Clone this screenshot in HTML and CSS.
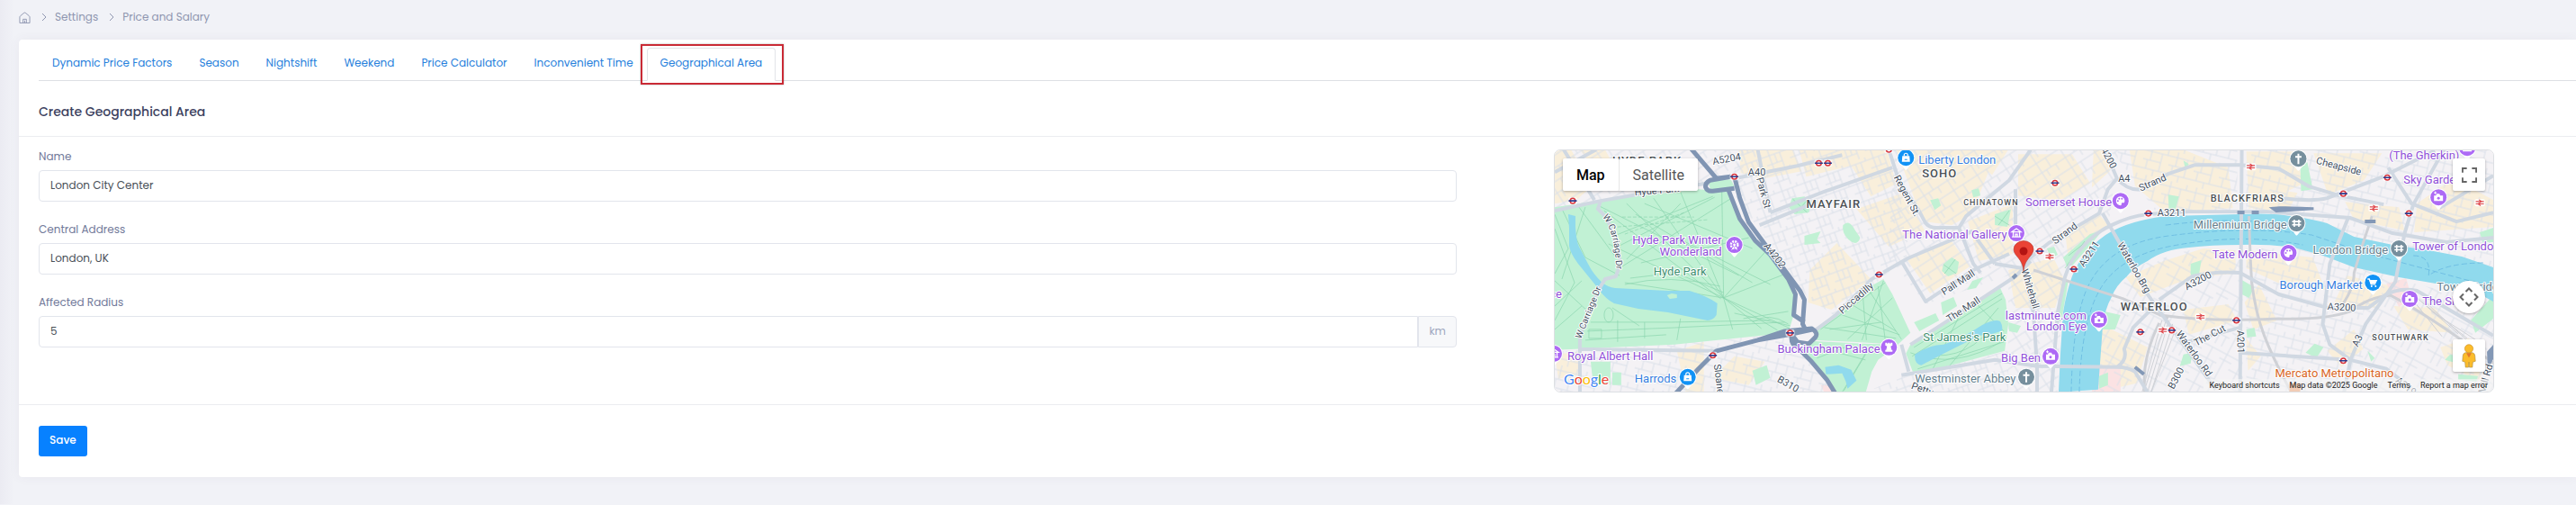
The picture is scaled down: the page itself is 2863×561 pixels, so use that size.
FILE: index.html
```
<!DOCTYPE html>
<html lang="en">
<head>
  <meta charset="UTF-8">
  <meta name="viewport" content="width=device-width, initial-scale=1.0">
  <title>Price and Salary - Geographical Area</title>
  <link rel="stylesheet" href="styles.css">
</head>
<body>
  <nav class="breadcrumb" aria-label="Breadcrumb">
    <a href="#" aria-label="Home">
      <svg class="icon-home" viewBox="0 0 14 14"><path d="M1 6.500Q1 5.500 2 4.800L6.300 1.300q.7-.5 1.400 0L12 4.800q1 .7 1 1.700V13.500H1zM5 13.500V9h4v4.500M7 10.500v3"/></svg>
    </a>
    <svg class="icon-chevron" viewBox="0 0 6 10"><path d="m1 1 4 4-4 4"/></svg>
    <a href="#">Settings</a>
    <svg class="icon-chevron" viewBox="0 0 6 10"><path d="m1 1 4 4-4 4"/></svg>
    <a href="#">Price and Salary</a>
  </nav>

  <main class="card">
    <ul class="tabs">
      <li><a href="#">Dynamic Price Factors</a></li>
      <li><a href="#">Season</a></li>
      <li><a href="#">Nightshift</a></li>
      <li><a href="#">Weekend</a></li>
      <li><a href="#">Price Calculator</a></li>
      <li><a href="#">Inconvenient Time</a></li>
      <li class="active"><a href="#">Geographical Area</a></li>
    </ul>

    <h1 class="card-title">Create Geographical Area</h1>

    <form class="area-form">
      <div class="form-body">
        <div class="fields">
          <div class="form-group">
            <label for="name">Name</label>
            <input type="text" id="name" value="London City Center">
          </div>
          <div class="form-group">
            <label for="address">Central Address</label>
            <input type="text" id="address" value="London, UK">
          </div>
          <div class="form-group">
            <label for="radius">Affected Radius</label>
            <div class="input-group">
              <input type="text" id="radius" value="5">
              <span class="input-addon">km</span>
            </div>
          </div>
        </div>

        <div class="map">
          <svg class="map-canvas" viewBox="0 0 1045 270" preserveAspectRatio="xMidYMid slice">
            <defs>
              <!-- Street grids -->
              <pattern id="grid-a" width="27" height="21" patternUnits="userSpaceOnUse" patternTransform="rotate(-20)">
                <path class="street" d="M0 4h27M0 14h18M6 0v21M18 4v17M24 0v4M12 4v10"/>
              </pattern>
              <pattern id="grid-b" width="31" height="25" patternUnits="userSpaceOnUse" patternTransform="rotate(-33)">
                <path class="street" d="M0 5h31M0 17h31M7 0v25M19 5v12M25 17v8M13 17v8"/>
              </pattern>
              <pattern id="grid-c" width="29" height="33" patternUnits="userSpaceOnUse" patternTransform="rotate(14)">
                <path class="street" d="M0 6h29M0 16h20M0 26h29M8 0v16M20 6v20M14 26v7M26 0v6M5 16v10"/>
              </pattern>
              <pattern id="grid-d" width="37" height="31" patternUnits="userSpaceOnUse" patternTransform="rotate(28)">
                <path class="street" d="M0 5h37M10 5v26M0 19h22M28 0v31M22 12h15M18 19v12"/>
              </pattern>
              <clipPath id="park-clip">
                <path d="M0 64 46 57 160 44 193 47 206 77 226 101 260 144 268 161 266 184 260 204 133 217 0 223z"/>
              </clipPath>

              <!-- Place pins, origin in the middle of the disc -->
              <g id="pin-shape">
                <path d="M-5 8-1 13q1 1 2 0L5 8z" fill="#fff"/>
                <circle r="10" fill="#fff"/>
              </g>
              <g id="pin-camera">
                <use href="#pin-shape"/><circle r="9" fill="#ad6af5"/>
                <path d="M-5-2h2l1-2h3l1 2h3v6H-5z" fill="#fff"/><circle cy="1" r="1.500" fill="#ad6af5"/><path d="M-5-5h3M-3.500-6.500v3" stroke="#fff"/>
              </g>
              <g id="pin-palette">
                <use href="#pin-shape"/><circle r="9" fill="#ad6af5"/>
                <path d="M0-5a5 5 0 1 0 0 10c2 0 0-3 2-3h2c2-3-1-7-4-7z" fill="#fff"/>
                <g fill="#ad6af5"><circle cx="-3" cy="0" r="1"/><circle cx="-1.500" cy="-2.500" r="1"/><circle cx="1.500" cy="-2.500" r="1"/></g>
              </g>
              <g id="pin-museum">
                <use href="#pin-shape"/><circle r="9" fill="#ad6af5"/>
                <path d="M-5-1.500 0-5l5 3.500zM-5 4H5M-3.500-1v5M3.500-1v5M-1 4V1h2v3" fill="none" stroke="#fff" stroke-width="1.300"/>
              </g>
              <g id="pin-rook">
                <use href="#pin-shape"/><circle r="9" fill="#ad6af5"/>
                <path d="M-4-5h2v1h1v-1h2v1h1v-1h2v3l-2 1 1 4h1v2h-8V3h1l1-4-2-1z" fill="#fff"/>
              </g>
              <g id="pin-ferris">
                <use href="#pin-shape"/><circle r="9" fill="#ad6af5"/>
                <circle r="3.800" fill="none" stroke="#fff" stroke-width="2.400" stroke-dasharray="2 1"/><circle r="1.500" fill="#fff"/><path d="m-3 5.500 3-4 3 4" fill="none" stroke="#fff"/>
              </g>
              <g id="pin-bag">
                <use href="#pin-shape"/><circle r="9" fill="#1192f5"/>
                <path d="M-4-2h8l.5 6.500h-9z" fill="#fff"/><path d="M-2-2v-1a2 2 0 0 1 4 0v1" fill="none" stroke="#fff" stroke-width="1.200"/><path d="M-1.500 2h3" stroke="#1192f5"/>
              </g>
              <g id="pin-cart">
                <use href="#pin-shape"/><circle r="9" fill="#1192f5"/>
                <path d="M-6-4h2l2 6h5" fill="none" stroke="#fff" stroke-width="1.300"/><path d="M-4-3h9l-2 4h-6z" fill="#fff"/><circle cx="-1.500" cy="4" r="1" fill="#fff"/><circle cx="3" cy="4" r="1" fill="#fff"/>
              </g>
              <g id="pin-church">
                <use href="#pin-shape"/><circle r="9" fill="#768f9d"/>
                <path d="M0-5.500V6M-3.500-2h7" stroke="#fff" stroke-width="2"/>
              </g>
              <g id="pin-bridge">
                <use href="#pin-shape"/><circle r="9" fill="#768f9d"/>
                <path d="M-2.500-4v8M2.500-4v8M-5-2H5M-5 1.500H5" stroke="#fff" stroke-width="1.600"/>
              </g>

              <!-- Stations -->
              <g id="tube">
                <rect x="-5" y="-4" width="10" height="8" rx="2" fill="#fff" opacity=".7"/>
                <circle r="2.800" fill="#fff" stroke="#d8343c" stroke-width="1.500"/><path d="M-4.500 0h9" stroke="#2b3a8c" stroke-width="1.600"/>
              </g>
              <g id="rail">
                <rect x="-6" y="-4" width="12" height="8" rx="2" fill="#fff" opacity=".8"/>
                <path d="M-4.500-1.300h9M-4.500 1.300h9M-1-3.300 2-1.300-2 1.300 1 3.300" fill="none" stroke="#df4a4f" stroke-width="1.100"/>
              </g>

              <path id="carriage-top" d="M53 75Q69 92 69 150"/>
              <path id="carriage-bottom" d="M29 211 60 134"/>
            </defs>

            <rect width="1045" height="270" fill="#f4f2f5"/>

            <!-- Commercial blocks -->
            <g fill="#f9efdb">
              <path d="M0 0h18l24 40-18 16-24 4zM28 0h28l12 22-18 8zM205 0h60l10 24-42 8-26-6zM272 0h98l10 38-28 14-22-34-50 12z"/>
              <path d="M336 66l52-18 24 42-40 18zM284 134l30-30 38 40-44 34-26-8zM380 0h70l34 22-20 50-22 12-32-4z"/>
              <path d="M450 0h55l-18 28zM516 5h60l20 32-34 20-46-6zM460 80l50-20v56l-38 8zM505 134l50-14 12 24-10 32h-44z"/>
              <path d="M568 90l38-18 10 12-44 40zM600 0h12l6 24-20 18zM640 0h60l50 20 5 45-75 5-34-30z"/>
              <path d="M392 122l50-20 20 28-44 30zM636 142l42-18 44-14 36 2v26l-48 4-58 22zM612 196l48 24-12 40-44 10 2-60z"/>
              <path d="M770 2h55l8 36-60 28zM845 4h76l-20 30-40 16zM775 40l52 8-10 20-40-2zM880 58l60 6 6 26-56-12zM960 60l40-28 45 24v30l-88 6z"/>
              <path d="M770 112l74 8 14 36-40-2-48-22zM882 140l50 12-20 24-44-6zM784 150l20 40-26 10-10-30zM700 178l50-6 10 18-54 16zM934 174l46 2 20 28-50-4zM860 224l30-24 10 22-24 20zM986 220l32-10 16 50-40-20z"/>
              <path d="M136 224l30-10v56h-20zM0 228l26-3v26l-22 4zM176 254l24-24 34 6-18 26zM770 210l16 20-14 16z"/>
            </g>
            <g fill="#fbe2e3">
              <path d="M602 241h28v29h-32zM926 149l22-6 6 22-14 10zM296 262h14l4 8h-14z"/>
            </g>

            <!-- Side streets -->
            <path d="M0 0h210v48L0 66z" fill="url(#grid-b)"/>
            <path d="M200 0h180l12 120-80 65-30-20-82-115z" fill="url(#grid-a)"/>
            <path d="M378 0h250l-10 74-52 60-6 136H505V140l-92 32-42-54z" fill="url(#grid-b)"/>
            <path d="M620 0h140v70H670zM770 0h275v130L880 98l-60-26h-50z" fill="url(#grid-c)"/>
            <path d="M600 270v-90l46-50 60-18h60v158zM900 270V124l36 20 109 26v100z" fill="url(#grid-d)"/>
            <path d="M0 225l266-20 50 65H0z" fill="url(#grid-c)"/>
            <path d="M345 270l50-20 110-26v46z" fill="url(#grid-a)"/>
            <path d="M770 110h80l50 20v140H770z" fill="url(#grid-c)"/>

            <!-- Parks -->
            <g fill="#c1f1d4">
              <path d="M0 64 46 57 160 44 193 47 206 77 226 101 260 144 268 161 266 184 260 204 133 217 0 223z"/>
              <path d="M170 35l26-2 4 8-26 4zM290 201l10-7 43-37 23-13 10 17 20 43-14 13-50-3-42-2z"/>
              <path d="M276 221l10-8 57 3 40 1-23 17-7 13-7 24h-33l-10-17z"/>
              <path d="M396 217l100-63 6 13 3 27-4 30-101 27-9-24z"/>
              <path d="M264 54l14-2 8 6-3 12-16 2-6-8zM321 84q6-6 11 2l8 12q-2 8-9 5-12-8-10-19zM278 96l18-5-4 9 4 4-18 2z"/>
              <path d="M566 120l30-26 14-4-10 12-28 32zM566 146l6-1-8 46h-6zM612 180l18 4-6 16-18 0zM433 127l9-7 8 5-2 12-10 4-7-6zM430 170l14-6 4 10-16 10zM400 192l24-10 4 8-22 12zM465 146l12-4-8 12-10 2z"/>
              <path d="M830 16l8-2 6 30-13 2zM708 127l12-4-4 24-8-8zM765 145l14 8-6 12-8-4zM836 226l10-10 10 4-8 12zM770 200l9-2 2 10-10 1zM1030 92l15-5v16h-12zM1020 190l25-28v26l-20 16z"/>
              <path d="M997 228l20 6-4 6-22-6zM1006 250l22 2-2 6-20-2zM683 50l12 2-6 22-5-2zM700 228l10-2-2 12-12 3zM905 224l8 8-4 4zM40 236h22v26l-20-8zM64 248h10v14H64zM220 246l16-6 4 14-16 8zM548 110l8-2 4 9-8 4zM505 192l14 4-4 8-9-2zM418 56l9-2 3 8-7 5zM464 45l8-2 2 8-8 2zM490 72l18-6-4 20-14-2zM700 12l6 4-4 5zM606 252l10-4v14l-10 4z"/>
            </g>

            <!-- Park paths -->
            <g class="park-path" clip-path="url(#park-clip)">
              <path d="M50 63 205 140M55 68l130 98M188 165 80 60M188 165 110 54M188 165 140 47M188 165l-2-120M188 165 236 112M188 165l72-28M188 165l74 34M188 165 60 105M75 130l125-78M80 122l60-62M96 126l120-28M70 108 178 53M66 96l110-44M78 148l110 17M188 165l42 34M188 165l60 36M188 165l10 35M100 60l120 50M140 100 240 150M90 72l130 76"/>
              <path d="M0 72 15 110 0 138M8 66 34 120 72 140M0 88l22 60-22 42M24 60l44 60M0 174l30-28M0 146l38 35M34 64l-26 80M0 200l30-26M64 176l30 20M40 192h90l110-2M36 202l100-4 120-6M34 212l90-6M70 190v24M100 192v18M140 188l-4 24M84 143l50-6 54 22M78 150q50-12 106 2M200 182l62 14M210 188l50-8M220 192q18-12 40 2M38 200h14v10H38zM60 176a5 8 0 1 0 .1 0"/>
              <path d="M75 75h80M70 86l100-8M78 94l66-24" stroke-dasharray="4 2"/>
            </g>
            <g class="park-path">
              <path d="M296 200l72-52M306 200l58-8M320 184l64 22M366 146l-24 66M350 157l36 54M330 172l50 30M300 198l80 12M343 162l4 50M376 165l-50 46M360 152l8 60"/>
              <path d="M400 220l98-60M398 230l100-64M404 244l96-30M440 240l54-64M420 246l30-60M396 226q50 20 104-14M470 172l30 30M300 222l46 12M292 232l36-14M322 268l24-40M350 220l-30 50M412 228q50 8 80-38"/>
              <path d="M265 55l16 15M283 54l-14 16M572 118l28-22M568 132l22-30M433 128l14 10M446 122l-12 16M490 74l16 10M506 68l-12 16"/>
            </g>

            <!-- Water -->
            <g fill="#90daed">
              <path d="M15 72l8 2v12q1 16 4 22l10 19q6 12 16 21 6 5 14 6l59 3 24 0q20 6 31 14l-1 13q-4 6-10 6l-44-9-33-4-27-6q-10-5-18-17L26 127q-9-12-10-20v-20z"/>
              <path d="M301 242l15-2 14 5 6 12-10 9-2-8-4-9-18 1zM401 228q16-11 32-11 22-8 43-22 14-7 20-4 3 5 2 10-6 4-25 6l-38 19-27 14q-8-2-7-12z"/>
              <path d="M561 270l2-43 3-46q4-24 10-40 6-16 17-27 12-15 27-23 16-8 33-12 16-4 30-5l80-2q34-2 57 2 22 3 40 8l30 15 43 9 40 6 37 7 35 12v38l-22-12-30-6-53-9-50-11-37-14-30-8q-28-4-60-3-32 0-57 3-28 2-46 15-16 8-23 17-12 10-17 23-8 14-10 34l-5 69z"/>
            </g>
            <path d="M125 162l5-2 6 1v4l-8 1z" fill="#c1f1d4"/>
            <g fill="none" stroke="#6fbfe3" stroke-dasharray="6 3">
              <path d="M575 270q2-90 22-124 24-42 86-50 90-12 160-1l60 20 60 16 82 22M584 270q2-80 24-116 20-34 75-46 80-16 150-2M680 84q80-10 140 0M956 118q20 0 17 22 20-14 62-14"/>
            </g>

            <!-- Railways -->
            <g fill="none" stroke="#cfd1d6" stroke-width="3">
              <path d="M773 74q1 40 3 73 4 34 14 60t30 63M673 184q60 8 133 4 50 2 80-8 20-16 44-18 40 20 116 76M910 74l-10 30-10 33q0 20-18 42M533 134l100 32 50 22M673 193q-20 40-16 77"/>
            </g>
            <g fill="none" stroke="#cfd1d6">
              <path d="M684 190l-24 80M680 192l-24 78M676 190l-22 80M688 194l-24 76M692 198l-28 72M960 165l46 40M966 170l50 40M972 172l48 44M956 168l32 40M976 180l50 32"/>
            </g>

            <!-- Main roads -->
            <g class="road">
              <path d="M0 68 51 57 120 45 172 37M51 57l-3 9 8 8 9 17 5 16 3 20-5 14-12 3-6 10-17 37-5 20v59M28 222l150 2M200 32l70-14 50-12M0 25l46-25M10 0l34 56"/>
              <path d="M226 0l14 70M240 70l62-24 74-26M228 84l54-22M290 0l-24-20"/>
              <path d="M372 0l11 34 22 33 8 15q4 5 12 5h25l8-13 48-40 24-34M450 87l16 40 8 10M290 201q14-10 23-17l40-40 40-23 57-24 14-6 26 36"/>
              <path d="M513 44v50l8 33M386 124l27 45 53-35 40-18M396 217l47-30 70-46 17-17M521 127l29-23 56-33 10-27 10-12-13-31M626 32q12 14 27 12l30-17 30-10h50l43 4 34 20 33 10 50 10M490 127l31 5"/>
              <path d="M521 127l12 54 4 60v30M553 270l7-89 8-39q6-20 20-34 14-16 32-24 20-10 40-12l46-3h87l93 7 47 17 60 10 52-5"/>
              <path d="M386 251l104-17 47 7 89 1q12 0 20 5l14 23M626 242q12-8 8-20l10-24 22-22M386 217l8 30M610 71l23 40 27 50 33 46 43 60M765 0l-2 270"/>
              <path d="M673 167l37-26q24-6 53-4l43 24 54 15h46l20-15q16-8 34-4l46 27 39 23M883 77l-20 50-8 67 8 23 23 17 40 10 34 26"/>
              <path d="M990 0l-34 61-10 33-10 53-33 47-17 40-8 40M810 54q34 4 50 0l60-23 60-30M928 20l26 40 50 20 41-10M985 65l60-36M700 215l63-17M762 226l124 8"/>
            </g>

            <!-- Through roads -->
            <g class="highway">
              <path d="M151-2l29 34 16-2-23 4q-6 3-5 8 2 5 8 4l24-3M200 30l6 24 10 27 17 23 23 30 17 23 5 10-2 27 4 8M193 44l13 33 17 24 17 16 20 27 8 17-2 23 12 8M288 200l-28 6-34 6-46 12-20 20-26 28M226 212l30-10 30-3q8 5 4 10l-7 7-13-2-6-8q-2 10 6 14l16 16 17 20 11 18"/>
            </g>
            <path d="M795 64l8 6 42-3v-3l-38-1zM1038 225l7-8v16l-6 12z" fill="#8398b6"/>
            <path d="M760 70h8M776 70h8M902 80h12M510 143l4-4M646 242l10 8" stroke="#8398b6" stroke-width="4"/>

            <use href="#tube" x="20" y="57"/><use href="#tube" x="200" y="30"/><use href="#tube" x="294" y="15"/><use href="#tube" x="304" y="15"/>
            <use href="#tube" x="262" y="204"/><use href="#tube" x="176" y="229"/><use href="#tube" x="372" y="0"/><use href="#tube" x="557" y="37"/>
            <use href="#tube" x="661" y="71"/><use href="#tube" x="540" y="113"/><use href="#tube" x="361" y="139"/><use href="#tube" x="578" y="133"/>
            <use href="#tube" x="652" y="203"/><use href="#tube" x="927" y="31"/><use href="#tube" x="878" y="49"/><use href="#tube" x="951" y="71"/>
            <use href="#tube" x="759" y="190"/><use href="#tube" x="687" y="201"/><use href="#tube" x="878" y="235"/>
            <use href="#rail" x="551" y="119"/><use href="#rail" x="677" y="201"/><use href="#rail" x="775" y="19"/><use href="#rail" x="912" y="65"/>
            <use href="#rail" x="1030" y="59"/><use href="#rail" x="719" y="186"/>

            <g class="label label-road">
              <text transform="translate(192 14) rotate(-10)">A5204</text>
              <text x="225" y="29">A40</text>
              <text transform="translate(229 49) rotate(75)">Park St</text>
              <text transform="translate(242 120) rotate(52)">A4202</text>
              <text transform="translate(180 262) rotate(83)">Sloane St</text>
              <text transform="translate(258 264) rotate(30)">B310</text>
              <text transform="translate(114 49) rotate(-5)">Hyde Park</text>
              <text transform="translate(338 168) rotate(-41)">Piccadilly</text>
              <text transform="translate(389 53) rotate(62)">Regent St.</text>
              <text transform="translate(451 151) rotate(-33)">Pall Mall</text>
              <text transform="translate(457 181) rotate(-33)">The Mall</text>
              <text transform="translate(526 156) rotate(73)">Whitehall</text>
              <text transform="translate(570 96) rotate(-37)">Strand</text>
              <text transform="translate(667 40) rotate(-24)">Strand</text>
              <text x="634" y="36">A4</text>
              <text transform="translate(612 8) rotate(62)">A4200</text>
              <text transform="translate(598 118) rotate(-56)">A3211</text>
              <text x="687" y="74">A3211</text>
              <text transform="translate(642 133) rotate(60)">Waterloo Brg</text>
              <text transform="translate(872 22) rotate(15)">Cheapside</text>
              <text transform="translate(718 149) rotate(-28)">A3200</text>
              <text transform="translate(876 179) rotate(3)">A3200</text>
              <text transform="translate(731 210) rotate(-28)">The Cut</text>
              <text transform="translate(760 214) rotate(88)">A201</text>
              <text transform="translate(709 229) rotate(54)">Waterloo Rd</text>
              <text transform="translate(695 256) rotate(-62)">B300</text>
              <text transform="translate(897 214) rotate(-65)">A3</text>
              <text transform="translate(948 268) rotate(38)">A2198</text>
              <text transform="translate(1040 256) rotate(-74)">Mill Rd</text>
              <text transform="translate(408 270) rotate(20)">Petty</text>
              <text class="start"><textPath href="#carriage-top">W Carriage Dr</textPath></text>
              <text class="start"><textPath href="#carriage-bottom">W Carriage Dr</textPath></text>
            </g>

            <g class="label label-area">
              <text x="64" y="17">HYDE PARK</text>
              <text x="280" y="65">MAYFAIR</text>
              <text x="409" y="31">SOHO</text>
              <text class="small" x="455" y="62">CHINATOWN</text>
              <text x="630" y="179">WATERLOO</text>
              <text class="medium" x="730" y="58">BLACKFRIARS</text>
              <text class="small" x="910" y="212">SOUTHWARK</text>
            </g>

            <g class="label label-park">
              <text x="110" y="140">Hyde Park</text>
              <text x="410" y="213">St James's Park</text>
            </g>

            <g class="label label-sight">
              <text class="end" x="186" y="105">Hyde Park Winter</text>
              <text class="end" x="186" y="118">Wonderland</text>
              <text class="end" x="8" y="165">Palace</text>
              <text x="14" y="234">Royal Albert Hall</text>
              <text x="248" y="226">Buckingham Palace</text>
              <text x="387" y="99">The National Gallery</text>
              <text x="524" y="63">Somerset House</text>
              <text class="end" x="592" y="189">lastminute.com</text>
              <text class="end" x="592" y="201">London Eye</text>
              <text x="497" y="236">Big Ben</text>
              <text x="732" y="121">Tate Modern</text>
              <text x="929" y="11">(The Gherkin)</text>
              <text x="945" y="38">Sky Garden</text>
              <text x="955" y="112">Tower of London</text>
              <text x="966" y="173">The Shard</text>
            </g>
            <g class="label label-shop">
              <text x="89" y="259">Harrods</text>
              <text x="405" y="16">Liberty London</text>
              <text x="807" y="155">Borough Market</text>
            </g>
            <g class="label label-place">
              <text x="401" y="259">Westminster Abbey</text>
              <text x="711" y="88">Millennium Bridge</text>
              <text x="844" y="116">London Bridge</text>
              <text x="982" y="157">Tower Bridge</text>
            </g>
            <g class="label label-food">
              <text x="802" y="253">Mercato Metropolitano</text>
            </g>

            <use href="#pin-ferris" x="200" y="106"/>
            <use href="#pin-museum" x="-1" y="227"/>
            <use href="#pin-bag" x="148" y="253"/>
            <use href="#pin-rook" x="372" y="220"/>
            <use href="#pin-bag" x="391" y="9"/>
            <use href="#pin-museum" x="514" y="93"/>
            <use href="#pin-palette" x="630" y="57"/>
            <use href="#pin-camera" x="606" y="189"/>
            <use href="#pin-camera" x="552" y="230"/>
            <use href="#pin-church" x="525" y="253"/>
            <use href="#pin-church" x="828" y="10"/>
            <use href="#pin-bridge" x="826" y="82"/>
            <use href="#pin-palette" x="817" y="115"/>
            <use href="#pin-bridge" x="940" y="110"/>
            <use href="#pin-cart" x="911" y="148"/>
            <use href="#pin-camera" x="952" y="166"/>
            <use href="#pin-camera" x="984" y="53"/>
            <use href="#pin-camera" x="1016" y="-2"/>
            <path d="M818 260h12v10h-12z" fill="#ee8f56"/>

            <!-- Marker -->
            <path d="M522 135c-1-9-4-12-7-16-3-3-4-6-4-8a11 9.500 0 0 1 22 0c0 2-1 5-4 8-3 4-6 7-7 16z" fill="#ea4335" stroke="#b6382d" stroke-width=".6"/>
            <circle cx="522" cy="113" r="4.500" fill="#b31412"/>

            <text class="google" x="10" y="261"><tspan fill="#4285f4">G</tspan><tspan fill="#ea4335">o</tspan><tspan fill="#fbbc04">o</tspan><tspan fill="#4285f4">g</tspan><tspan fill="#34a853">l</tspan><tspan fill="#ea4335">e</tspan></text>
          </svg>

          <div class="map-types">
            <button type="button" class="selected">Map</button>
            <button type="button">Satellite</button>
          </div>
          <div class="map-controls">
            <button type="button" class="map-button" aria-label="Toggle fullscreen view">
              <svg viewBox="0 0 18 18"><path d="M0 0h6v2H2v4H0zM18 0h-6v2h4v4h2zM0 18h6v-2H2v-4H0zM18 18h-6v-2h4v-4h2z" fill="#666"/></svg>
            </button>
            <button type="button" class="map-button round" aria-label="Map camera controls">
              <svg class="camera" viewBox="0 0 22 22"><path d="m7.500 5 3.500-3.500L14.500 5M7.500 17l3.500 3.500 3.500-3.500M5 7.500 1.500 11 5 14.500M17 7.500l3.500 3.500-3.500 3.500" fill="none" stroke="#666" stroke-width="2"/></svg>
            </button>
            <button type="button" class="map-button" aria-label="Street View">
              <svg class="pegman" viewBox="0 0 16 28">
                <path d="M4 10h8q3 1 3 4l.5 6-3 1-.5 6H8.500L8 21l-.5 6H4l-.5-6-3-1L1 14q0-3 3-4z" fill="#fbbc2c" stroke="#a8893f" stroke-width=".6"/>
                <circle cx="8" cy="5.500" r="4.800" fill="#fbbc2c" stroke="#c98a22" stroke-width=".6"/>
                <path d="M5 10.500h6L8 16z" fill="#e37a2d"/>
              </svg>
            </button>
          </div>
          <div class="map-legal">
            <a href="#">Keyboard shortcuts</a>
            <span>Map data ©2025 Google</span>
            <a href="#">Terms</a>
            <a href="#">Report a map error</a>
          </div>
        </div>
      </div>

      <div class="form-footer">
        <button type="submit" class="btn-save">Save</button>
      </div>
    </form>
  </main>
</body>
</html>
```

FILE: styles.css
```
* {
  box-sizing: border-box;
}
body {
  margin: 0;
  padding: 0 0 30px 21px;
  font-family: Poppins, Inter, sans-serif;
  font-size: 12px;
  background: #f1f2f7 linear-gradient(to right, #ebebf2, #f1f2f7 16px) no-repeat;
}
a {
  color: inherit;
  text-decoration: none;
}
button,
input {
  font-family: inherit;
  font-size: inherit;
}

/**
 * Breadcrumb.
 */
.breadcrumb {
  display: flex;
  align-items: center;
  gap: 9px;
  height: 44px;
  padding-bottom: 6px;
  color: #8f96b0;
}
.breadcrumb svg {
  display: block;
  fill: none;
  stroke: #8f96b0;
}
.icon-home {
  width: 13px;
  height: 13px;
}
.icon-chevron {
  width: 6px;
  height: 10px;
  margin-left: 3px;
}

/**
 * Card and tabs.
 */
.card {
  background: #fff;
  border-radius: 4px 0 0 4px;
  box-shadow: 0 0 13px rgba(82, 63, 105, 0.06);
}
.tabs {
  display: flex;
  height: 46px;
  margin: 0 0 0 22px;
  padding: 9px 0 0;
  list-style: none;
  border-bottom: 1px solid #dee0e4;
}
.tabs li {
  position: relative;
}
.tabs a {
  display: block;
  height: 37px;
  padding: 0 14px;
  line-height: 32px;
  color: #2680dc;
  border: 1px solid transparent;
}
.tabs .active a {
  background: #fff;
  border-color: #e2e4e8;
  border-bottom-color: #fff;
  border-radius: 4px 4px 0 0;
}
/* Highlight frame */
.tabs .active::after {
  content: "";
  position: absolute;
  inset: -4px -9px -5px -7px;
  border: 2px solid #c92a35;
  box-shadow: 0 0 2px rgba(0, 0, 0, 0.3);
  pointer-events: none;
}
.card-title {
  margin: 0;
  padding: 0 22px;
  line-height: 68px;
  height: 62px;
  font-size: 14px;
  font-weight: 500;
  color: #3d4260;
  border-bottom: 1px solid #ebedf0;
}

/**
 * Form.
 */
.form-body {
  display: grid;
  grid-template-columns: 1.508fr 1fr;
  gap: 108px;
  padding: 14px 91px 13px 22px;
  border-bottom: 1px solid #ebedf0;
}
.form-group {
  margin-bottom: 23px;
}
.form-group label {
  display: block;
  height: 23px;
  line-height: 16px;
  color: #727a9a;
}
.form-group input {
  display: block;
  width: 100%;
  height: 35px;
  padding: 0 12px 2px;
  color: #495057;
  background: #fff;
  border: 1px solid #e2e5ec;
  border-radius: 4px;
}
.input-group {
  display: flex;
}
.input-group input {
  border-radius: 4px 0 0 4px;
}
.input-addon {
  padding: 0 11px;
  line-height: 31px;
  color: #a0a8c0;
  background: #f7f8fa;
  border: 1px solid #e2e5ec;
  border-radius: 0 4px 4px 0;
}
.form-footer {
  padding: 23px 22px;
}
.btn-save {
  display: block;
  height: 34px;
  padding: 0 12px 2px;
  color: #fff;
  font-weight: 500;
  background: #0781ff;
  border: none;
  border-radius: 3px;
}

/**
 * Map.
 */
.map {
  position: relative;
  height: 270px;
  overflow: hidden;
  font-family: Roboto, sans-serif;
  border: 1px solid #dddfe3;
  border-radius: 7px;
}
.map-canvas {
  display: block;
  width: 100%;
  height: 100%;
}
.street {
  fill: none;
  stroke: #dae0e9;
  stroke-width: 1;
}
.road {
  fill: none;
  stroke: #d0d8e2;
  stroke-width: 4;
  stroke-linejoin: round;
}
.highway {
  fill: none;
  stroke: #8095b3;
  stroke-width: 5;
  stroke-linejoin: round;
}
.park-path {
  fill: none;
  stroke: #8bd5ae;
  stroke-width: 0.7;
}

.label text {
  font-size: 13px;
  paint-order: stroke;
  stroke: #fff;
  stroke-width: 2px;
  stroke-linejoin: round;
}
.label .end {
  text-anchor: end;
}
.label-road text {
  font-size: 11px;
  text-anchor: middle;
  fill: #44505f;
}
.label-road .start {
  font-size: 10px;
  text-anchor: start;
}
.label-area text {
  font-size: 13px;
  font-weight: 500;
  letter-spacing: 1px;
  fill: #4b5054;
}
.label-area .medium {
  font-size: 11px;
}
.label-area .small {
  font-size: 9px;
}
.label-park {
  fill: #3d8f70;
}
.label-sight {
  fill: #9050d8;
}
.label-shop {
  fill: #3880e0;
}
.label-place {
  fill: #64808e;
}
.label-food {
  fill: #d9661f;
}
.google {
  font-family: Lato, sans-serif;
  font-size: 16px;
  paint-order: stroke;
  stroke: #fff;
  stroke-width: 2px;
}

.map-types {
  position: absolute;
  top: 9px;
  left: 9px;
  display: flex;
  box-shadow: 0 1px 3px rgba(0, 0, 0, 0.3);
  border-radius: 2px;
}
.map-types button {
  height: 36px;
  padding: 0 15px;
  font-size: 16px;
  color: #565656;
  background: #fff;
  border: none;
  border-radius: 2px;
}
.map-types .selected {
  color: #000;
  font-weight: 500;
  border-right: 1px solid #e6e6e6;
}
.map-controls {
  position: absolute;
  top: 9px;
  right: 9px;
  bottom: 22px;
  display: flex;
  flex-direction: column;
}
.map-button {
  display: flex;
  align-items: center;
  justify-content: center;
  width: 36px;
  height: 36px;
  padding: 0;
  background: #fff;
  border: none;
  border-radius: 2px;
  box-shadow: 0 1px 3px rgba(0, 0, 0, 0.3);
}
.map-button.round {
  margin: auto 0 29px;
  border-radius: 50%;
}
.map-button svg {
  width: 17px;
  height: 17px;
}
.map-button .camera {
  width: 22px;
  height: 22px;
}
.map-button .pegman {
  width: 16px;
  height: 27px;
}
.map-legal {
  position: absolute;
  right: 0;
  bottom: 0;
  display: flex;
  gap: 11px;
  padding: 0 6px;
  height: 14px;
  line-height: 14px;
  font-size: 9px;
  color: #222;
  background: rgba(245, 245, 245, 0.6);
}
```
